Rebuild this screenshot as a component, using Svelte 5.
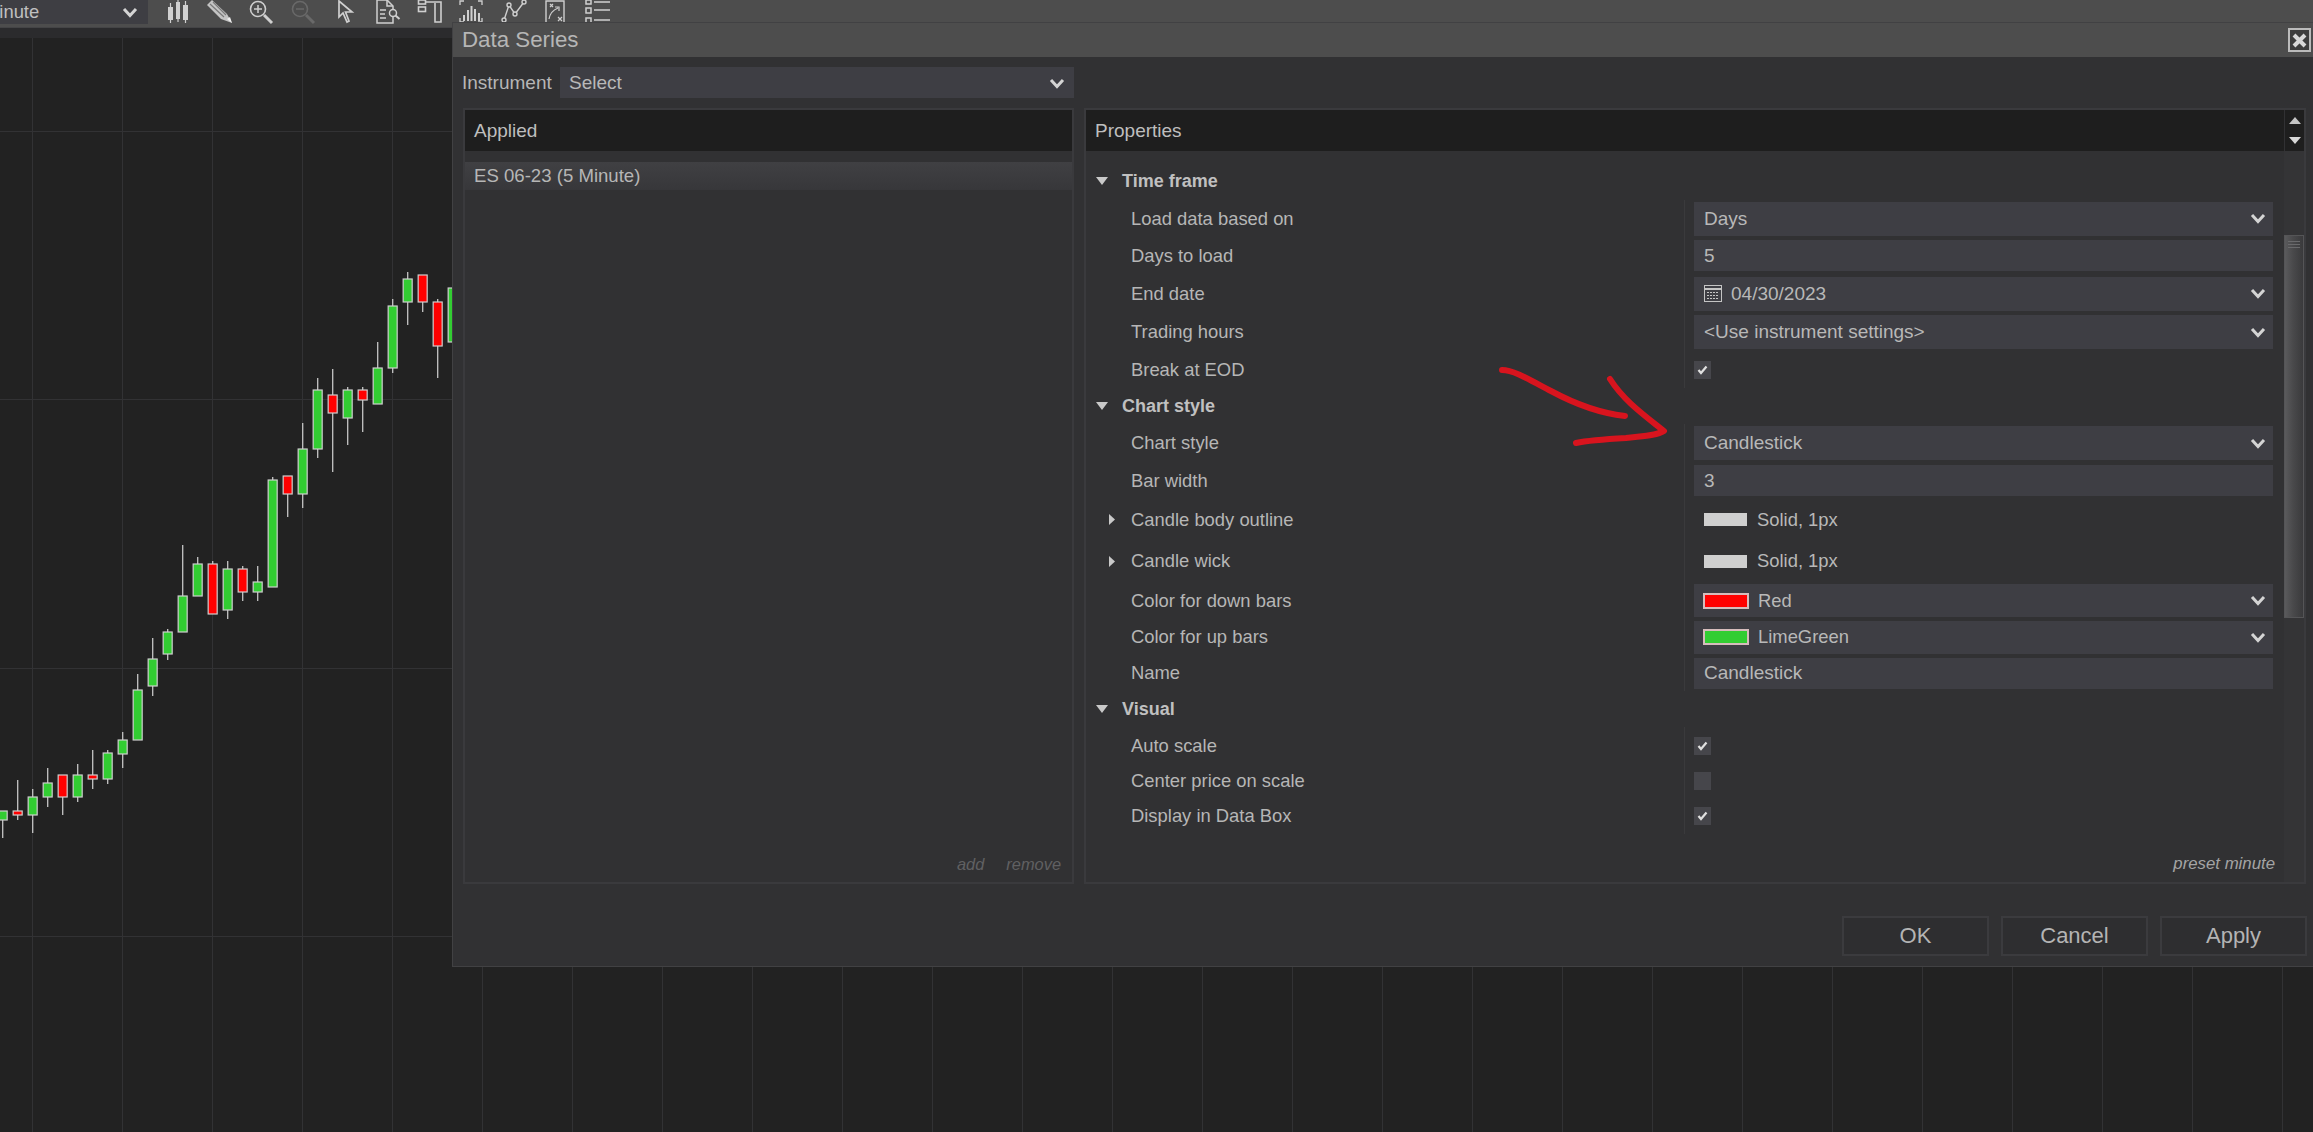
<script>
  // [up, bodyTop, bodyBottom, wickTop, wickBottom]
  const candles = [
    [1, 811, 820, 811, 838], [0, 811, 815, 780, 820], [1, 797, 815, 789, 833], [1, 783, 797, 768, 807],
    [0, 775, 797, 775, 815], [1, 775, 797, 764, 802], [0, 775, 779, 750, 789], [1, 753, 779, 750, 784],
    [1, 740, 754, 732, 768], [1, 690, 740, 674, 740], [1, 659, 686, 638, 696], [1, 632, 654, 629, 660],
    [1, 596, 632, 545, 632], [1, 564, 596, 557, 596], [0, 564, 614, 561, 614], [1, 569, 610, 561, 619],
    [0, 569, 592, 566, 601], [1, 582, 592, 566, 601], [1, 480, 587, 477, 587], [0, 476, 494, 476, 517],
    [1, 449, 494, 423, 508], [1, 390, 449, 378, 458], [0, 395, 413, 369, 472], [1, 390, 418, 387, 445],
    [0, 390, 400, 387, 432], [1, 368, 404, 342, 404], [1, 306, 368, 299, 373], [1, 279, 302, 272, 325],
    [0, 275, 302, 275, 312], [0, 302, 346, 299, 378], [1, 288, 342, 288, 342]
  ];

  const gridX = Array.from({ length: 26 }, (_, i) => 32.5 + i * 90);
  const gridY = [131.5, 399.5, 668.5, 936.5];

  const rows = [
    { h: 38, head: 'Time frame' },
    { h: 37, label: 'Load data based on', type: 'select', value: 'Days' },
    { h: 37, label: 'Days to load', type: 'text', value: '5' },
    { h: 39, label: 'End date', type: 'date', value: '04/30/2023' },
    { h: 38, label: 'Trading hours', type: 'select', value: '<Use instrument settings>' },
    { h: 37, label: 'Break at EOD', type: 'check', checked: true },
    { h: 36, head: 'Chart style' },
    { h: 38, label: 'Chart style', type: 'select', value: 'Candlestick' },
    { h: 37, label: 'Bar width', type: 'text', value: '3' },
    { h: 41, label: 'Candle body outline', type: 'stroke', value: 'Solid, 1px', more: true },
    { h: 42, label: 'Candle wick', type: 'stroke', value: 'Solid, 1px', more: true },
    { h: 37, label: 'Color for down bars', type: 'color', value: 'Red', color: '#ff0000' },
    { h: 36, label: 'Color for up bars', type: 'color', value: 'LimeGreen', color: '#32cd32' },
    { h: 36, label: 'Name', type: 'text', value: 'Candlestick' },
    { h: 36, head: 'Visual' },
    { h: 37, label: 'Auto scale', type: 'check', checked: true },
    { h: 34, label: 'Center price on scale', type: 'check', checked: false },
    { h: 36, label: 'Display in Data Box', type: 'check', checked: true }
  ];
</script>

{#snippet chevron()}
  <svg class="chevron" width="16" height="11" viewBox="0 0 16 11"><path d="M2 2l6 6.500L14 2" fill="none" stroke="#d4d4d4" stroke-width="3" /></svg>
{/snippet}

<div class="screen">
  <svg class="chart" width="2313" height="1132" viewBox="0 0 2313 1132">
    {#each gridX as x}
      <line x1={x} y1="38" x2={x} y2="1132" stroke="#323234" stroke-width="1" />
    {/each}
    {#each gridY as y}
      <line x1="0" y1={y} x2="2313" y2={y} stroke="#323234" stroke-width="1" />
    {/each}
    {#each candles as c, i}
      {@const x = 2.67 + i * 15}
      <line x1={x} y1={c[3]} x2={x} y2={c[4]} stroke="#bdbdbd" stroke-width="1.4" />
      <rect x={x - 4.5} y={c[1]} width="9" height={c[2] - c[1]} fill={c[0] ? '#32cd32' : '#ff0000'} stroke="#cfcfcf" stroke-width="1.2" />
    {/each}
  </svg>

  <div class="toolbar">
    <div class="timeframe">
      <span class="timeframe-text">Minute</span>
      {@render chevron()}
    </div>
    <div class="tools">
      <svg viewBox="0 0 26 26"><path d="M5.500 3v20M13 0v22M20.500 1v22" stroke="#d0d0d0" stroke-width="1.200" /><path d="M3 7h5v13H3zM11 2h4v17h-4zM18 5h5v15h-5z" fill="#d0d0d0" /></svg>
      <svg viewBox="0 0 26 26"><path d="M0 5l5-5 15 14 5 9-11-4z" fill="#c4c4c4" /><path d="M3 4l14 13M6 2l13 13" stroke="#7a7a7a" stroke-width="1.200" /><path d="M20 19l5 4-2-6z" fill="#f0f0f0" /></svg>
      <svg viewBox="0 0 26 26" fill="none" stroke="#cfcfcf"><circle cx="9" cy="9" r="7.500" stroke-width="1.600" /><path d="M9 5v8M5 9h8" stroke-width="1.500" /><path d="M15 15l8 8" stroke-width="3" /></svg>
      <svg viewBox="0 0 26 26" fill="none" stroke="#696969"><circle cx="9" cy="9" r="7.500" stroke-width="1.600" /><path d="M5 9h8" stroke-width="1.500" /><path d="M15 15l8 8" stroke-width="3" /></svg>
      <svg viewBox="0 0 26 26"><path d="M6 1v16l4-4 4 9 2-1-3.500-9H19z" fill="none" stroke="#d0d0d0" stroke-width="1.700" /></svg>
      <svg viewBox="0 0 26 26" fill="none" stroke="#cfcfcf" stroke-width="1.500"><path d="M2 0h10l6 6v17H2z" /><path d="M12 0v6h6M5 10h6M5 14h5M5 18h6" /><circle cx="18" cy="13" r="3.500" fill="#4d4d4d" /><path d="M20.500 15.500l4 3.500" stroke-width="2" /></svg>
      <svg viewBox="0 0 26 26" fill="none" stroke="#cfcfcf" stroke-width="1.600"><path d="M9 2h15v20h-6V3" /><rect x="1.500" y="0" width="7" height="4" /><rect x="1.500" y="7" width="7" height="4.500" /></svg>
      <svg viewBox="0 0 26 26" fill="none" stroke="#cfcfcf" stroke-width="1.300"><path d="M1 5V1h4M19 1h4v4M1 18v4h4M19 22h4v-4" /><path d="M5 21v-6M9 21V10M12.500 21V6M16 21V9M20 21v-8" stroke-width="2" /></svg>
      <svg viewBox="0 0 26 26" fill="none" stroke="#cfcfcf" stroke-width="1.400"><path d="M3 20L8 5l6 9L23 2" /><circle cx="3" cy="20" r="2" fill="#4d4d4d" /><circle cx="8" cy="5" r="2" fill="#4d4d4d" /><circle cx="14" cy="14" r="2" fill="#4d4d4d" /><circle cx="23" cy="2" r="2" fill="#4d4d4d" /></svg>
      <svg viewBox="0 0 26 26" fill="none" stroke="#cfcfcf" stroke-width="1.400"><path d="M3 1h18v22H3z" /><path d="M7 4l3 3M10 4L7 7M15 17l4 4M19 17l-4 4M6 19c1-6 4-9 9-11M12 7h4v4" stroke-width="1.200" /></svg>
      <svg viewBox="0 0 26 26" fill="none" stroke="#cfcfcf" stroke-width="1.500"><path d="M1 0h5v4H1zM1 8h5v5H1zM1 18h5v5H1zM9 2h16M9 10h16M9 20h16" /></svg>
    </div>
  </div>
  <div class="strip"></div>

  <div class="dialog">
    <div class="titlebar">
      <span>Data Series</span>
      <button class="close" aria-label="Close">
        <svg width="15" height="15" viewBox="0 0 15 15"><path d="M2 2l11 11M13 2L2 13" stroke="#d8d8d8" stroke-width="4" /></svg>
      </button>
    </div>

    <div class="instrument">
      <span class="instrument-label">Instrument</span>
      <div class="field select-field instrument-select">
        <span>Select</span>
        {@render chevron()}
      </div>
    </div>

    <div class="panels">
      <section class="panel">
        <div class="panel-head">Applied</div>
        <div class="applied-row">ES 06-23 (5 Minute)</div>
        <div class="applied-foot"><span>add</span><span>remove</span></div>
      </section>

      <section class="panel">
        <div class="panel-head props-head">
          <span>Properties</span>
          <div class="scroll-btns">
            <svg width="12" height="7" viewBox="0 0 12 7"><path d="M6 0l6 7H0z" fill="#c4c4c4" /></svg>
            <svg width="12" height="7" viewBox="0 0 12 7"><path d="M0 0h12L6 7z" fill="#d8d8d8" /></svg>
          </div>
        </div>
        <div class="props-body">
          <div class="props-main">
            <div class="rows">
              {#each rows as row}
                <div class="row" style="height: {row.h}px">
                  {#if row.head}
                    <div class="group-head">
                      <svg width="12" height="8" viewBox="0 0 12 8"><path d="M0 0h12L6 8z" fill="#c9c9c9" /></svg>
                      {row.head}
                    </div>
                  {:else}
                    <div class="label">
                      {#if row.more}
                        <svg class="more" width="6" height="11" viewBox="0 0 6 11"><path d="M0 0l6 5.500L0 11z" fill="#c9c9c9" /></svg>
                      {/if}
                      {row.label}
                    </div>
                    <div class="value">
                      {#if row.type === 'select'}
                        <div class="field select-field">{row.value}{@render chevron()}</div>
                      {:else if row.type === 'text'}
                        <div class="field text-field">{row.value}</div>
                      {:else if row.type === 'date'}
                        <div class="field select-field">
                          <span class="date">
                            <svg width="18" height="17" viewBox="0 0 18 17" fill="none" stroke="#c4c4c4"><rect x="0.500" y="0.500" width="17" height="16" /><path d="M1 4h16" stroke-width="2" /><path d="M3 7.500h12M3 10.500h12M3 13.500h12" stroke-dasharray="2 1" /></svg>
                            {row.value}
                          </span>
                          {@render chevron()}
                        </div>
                      {:else if row.type === 'check'}
                        <div class="check">
                          {#if row.checked}
                            <svg width="11" height="10" viewBox="0 0 11 10"><path d="M1.500 5l2.500 3L9.500 1.500" fill="none" stroke="#e0e0e0" stroke-width="2.200" /></svg>
                          {/if}
                        </div>
                      {:else if row.type === 'stroke'}
                        <div class="stroke-value"><i class="stroke-swatch"></i>{row.value}</div>
                      {:else if row.type === 'color'}
                        <div class="field select-field color-field">
                          <span class="date"><i class="color-swatch" style="background: {row.color}"></i>{row.value}</span>
                          {@render chevron()}
                        </div>
                      {/if}
                    </div>
                  {/if}
                </div>
              {/each}
            </div>
            <div class="preset">preset minute</div>
          </div>
          <div class="scrollbar">
            <div class="thumb"><i></i><i></i><i></i></div>
          </div>
        </div>
      </section>
    </div>

    <div class="buttons">
      <button>OK</button>
      <button>Cancel</button>
      <button>Apply</button>
    </div>
  </div>

  <svg class="annotation" width="2313" height="1132" viewBox="0 0 2313 1132" fill="none" stroke="#d8141e" stroke-width="6" stroke-linecap="round" stroke-linejoin="round">
    <path d="M1502 370c12 0 28 10 49 21 24 13 48 22 74 25" />
    <path d="M1610 379c14 22 34 36 54 52-8 5-22 5-38 7-18 1-36 2-50 5" />
  </svg>
</div>

<style>
  :global(body) {
    margin: 0;
    background: #222222;
  }

  .screen {
    position: relative;
    width: 2313px;
    height: 1132px;
    overflow: hidden;
    background: #222222;
    font-family: "Liberation Sans", Arial, sans-serif;
    font-size: 18.4px;
    color: #b6b6b6;
  }

  .chart {
    position: absolute;
    left: 0;
    top: 0;
  }

  .annotation {
    position: absolute;
    left: 0;
    top: 0;
    pointer-events: none;
  }

  .toolbar {
    position: relative;
    display: flex;
    height: 27px;
    background: #4d4d4d;
    border-bottom: 1px solid #444446;
  }

  .timeframe {
    display: flex;
    align-items: center;
    justify-content: space-between;
    box-sizing: border-box;
    width: 148px;
    height: 24px;
    padding-right: 10px;
    overflow: hidden;
    background: #3e3e43;
    color: #c0c0c0;
  }

  .timeframe-text {
    margin-left: -16px;
  }

  .tools {
    display: flex;
    gap: 16px;
    margin-left: 17px;
  }

  .tools svg {
    width: 26px;
    height: 26px;
  }

  .strip {
    position: relative;
    height: 10px;
    background: #2b2b2d;
  }

  .dialog {
    position: absolute;
    left: 452px;
    top: 22px;
    right: 0;
    height: 945px;
    box-sizing: border-box;
    padding: 0 7px 0 10px;
    background: #313133;
    border: 1px solid #414143;
    border-right: 0;
  }

  .titlebar {
    display: flex;
    align-items: center;
    justify-content: space-between;
    height: 34px;
    margin: 0 -7px 0 -10px;
    padding: 0 2px 0 9px;
    background: #4d4d4d;
    font-size: 22.3px;
    color: #b6b6b6;
  }

  .close {
    display: flex;
    align-items: center;
    justify-content: center;
    box-sizing: border-box;
    width: 23px;
    height: 24px;
    padding: 0;
    background: #3d3d3d;
    border: 2px solid #bbbbbb;
  }

  .instrument {
    display: flex;
    align-items: center;
    height: 31px;
    margin: 10px 0 10px -1px;
    font-size: 19px;
  }

  .instrument-label {
    width: 98px;
    padding-top: 1px;
  }

  .field {
    display: flex;
    align-items: center;
    box-sizing: border-box;
    padding-left: 10px;
    background: #3e3e44;
    font-size: 19px;
    color: #b8b8b8;
  }

  .select-field {
    justify-content: space-between;
    height: 34px;
    padding-right: 7px;
  }

  .instrument-select {
    width: 514px;
    height: 31px;
    padding: 1px 9px 0;
  }

  .text-field {
    height: 31px;
  }

  .color-field {
    height: 33px;
    padding-left: 9px;
    font-size: 18.4px;
  }

  .panels {
    display: grid;
    grid-template-columns: 611px 1222px;
    gap: 10px;
    height: 776px;
  }

  .panel {
    position: relative;
    display: flex;
    flex-direction: column;
    box-sizing: border-box;
    min-height: 0;
    border: 2px solid #3a3a3d;
  }

  .panel-head {
    display: flex;
    align-items: center;
    flex: none;
    height: 41px;
    padding-left: 9px;
    background: #1e1e1e;
    font-size: 19px;
    color: #bebebe;
  }

  .props-head {
    justify-content: space-between;
  }

  .scroll-btns {
    display: flex;
    flex-direction: column;
    align-items: center;
    justify-content: center;
    gap: 13px;
    box-sizing: border-box;
    width: 20px;
    height: 100%;
    border-left: 1px solid #313133;
  }

  .applied-row {
    display: flex;
    align-items: center;
    height: 28px;
    margin-top: 11px;
    padding-left: 9px;
    background: linear-gradient(#404043, #37373a);
    font-size: 18.6px;
    color: #b6b6b6;
  }

  .applied-foot {
    display: flex;
    justify-content: flex-end;
    gap: 22px;
    margin-top: auto;
    padding: 0 11px 8px 0;
    font-size: 16.4px;
    font-style: italic;
    color: #606062;
  }

  .props-body {
    display: flex;
    flex: 1;
    min-height: 0;
  }

  .props-main {
    display: flex;
    flex-direction: column;
    flex: 1;
    min-width: 0;
  }

  .rows {
    padding-top: 11px;
  }

  .row {
    display: flex;
    align-items: center;
  }

  .group-head {
    display: flex;
    align-items: center;
    gap: 14px;
    padding-left: 10px;
    font-size: 18px;
    font-weight: 700;
    color: #c0c0c0;
  }

  .label {
    display: flex;
    align-items: center;
    flex: none;
    box-sizing: border-box;
    width: 598px;
    padding-left: 45px;
  }

  .more {
    margin: 0 16px 0 -22px;
  }

  .value {
    display: flex;
    flex-direction: column;
    justify-content: center;
    flex: 1;
    box-sizing: border-box;
    min-width: 0;
    height: 100%;
    padding: 0 11px 0 9px;
    border-left: 1px solid #3a3a3c;
  }

  .chevron {
    flex: none;
  }

  .date {
    display: flex;
    align-items: center;
    gap: 9px;
  }

  .check {
    display: flex;
    align-items: center;
    justify-content: center;
    width: 17px;
    height: 18px;
    background: #46464b;
  }

  .stroke-value {
    display: flex;
    align-items: center;
    gap: 10px;
    padding-left: 10px;
    color: #b8b8b8;
  }

  .stroke-swatch {
    width: 43px;
    height: 13px;
    background: #cfcfcf;
  }

  .color-swatch {
    box-sizing: border-box;
    width: 46px;
    height: 16px;
    border: 2px solid #d6bcbc;
  }

  .preset {
    margin-top: auto;
    padding: 0 9px 8px 0;
    text-align: right;
    font-size: 16.8px;
    font-style: italic;
    color: #a4a4a4;
  }

  .scrollbar {
    flex: none;
    width: 20px;
    background: #343436;
  }

  .thumb {
    display: flex;
    flex-direction: column;
    gap: 2px;
    box-sizing: border-box;
    height: 383px;
    margin-top: 84px;
    padding: 5px 3px 0;
    background: linear-gradient(90deg, #5a5a5c, #49494b 45%, #3a3a3c);
    border: 1px solid #555557;
  }

  .thumb i {
    height: 1px;
    background: #6a6a6c;
  }

  .buttons {
    display: flex;
    justify-content: flex-end;
    gap: 12px;
    margin: 32px -1px 0 0;
  }

  .buttons button {
    box-sizing: border-box;
    width: 147px;
    height: 40px;
    padding: 0;
    background: #2e2e30;
    border: 2px solid #3b3b3e;
    font-family: inherit;
    font-size: 22px;
    color: #b4b4b4;
  }
</style>
